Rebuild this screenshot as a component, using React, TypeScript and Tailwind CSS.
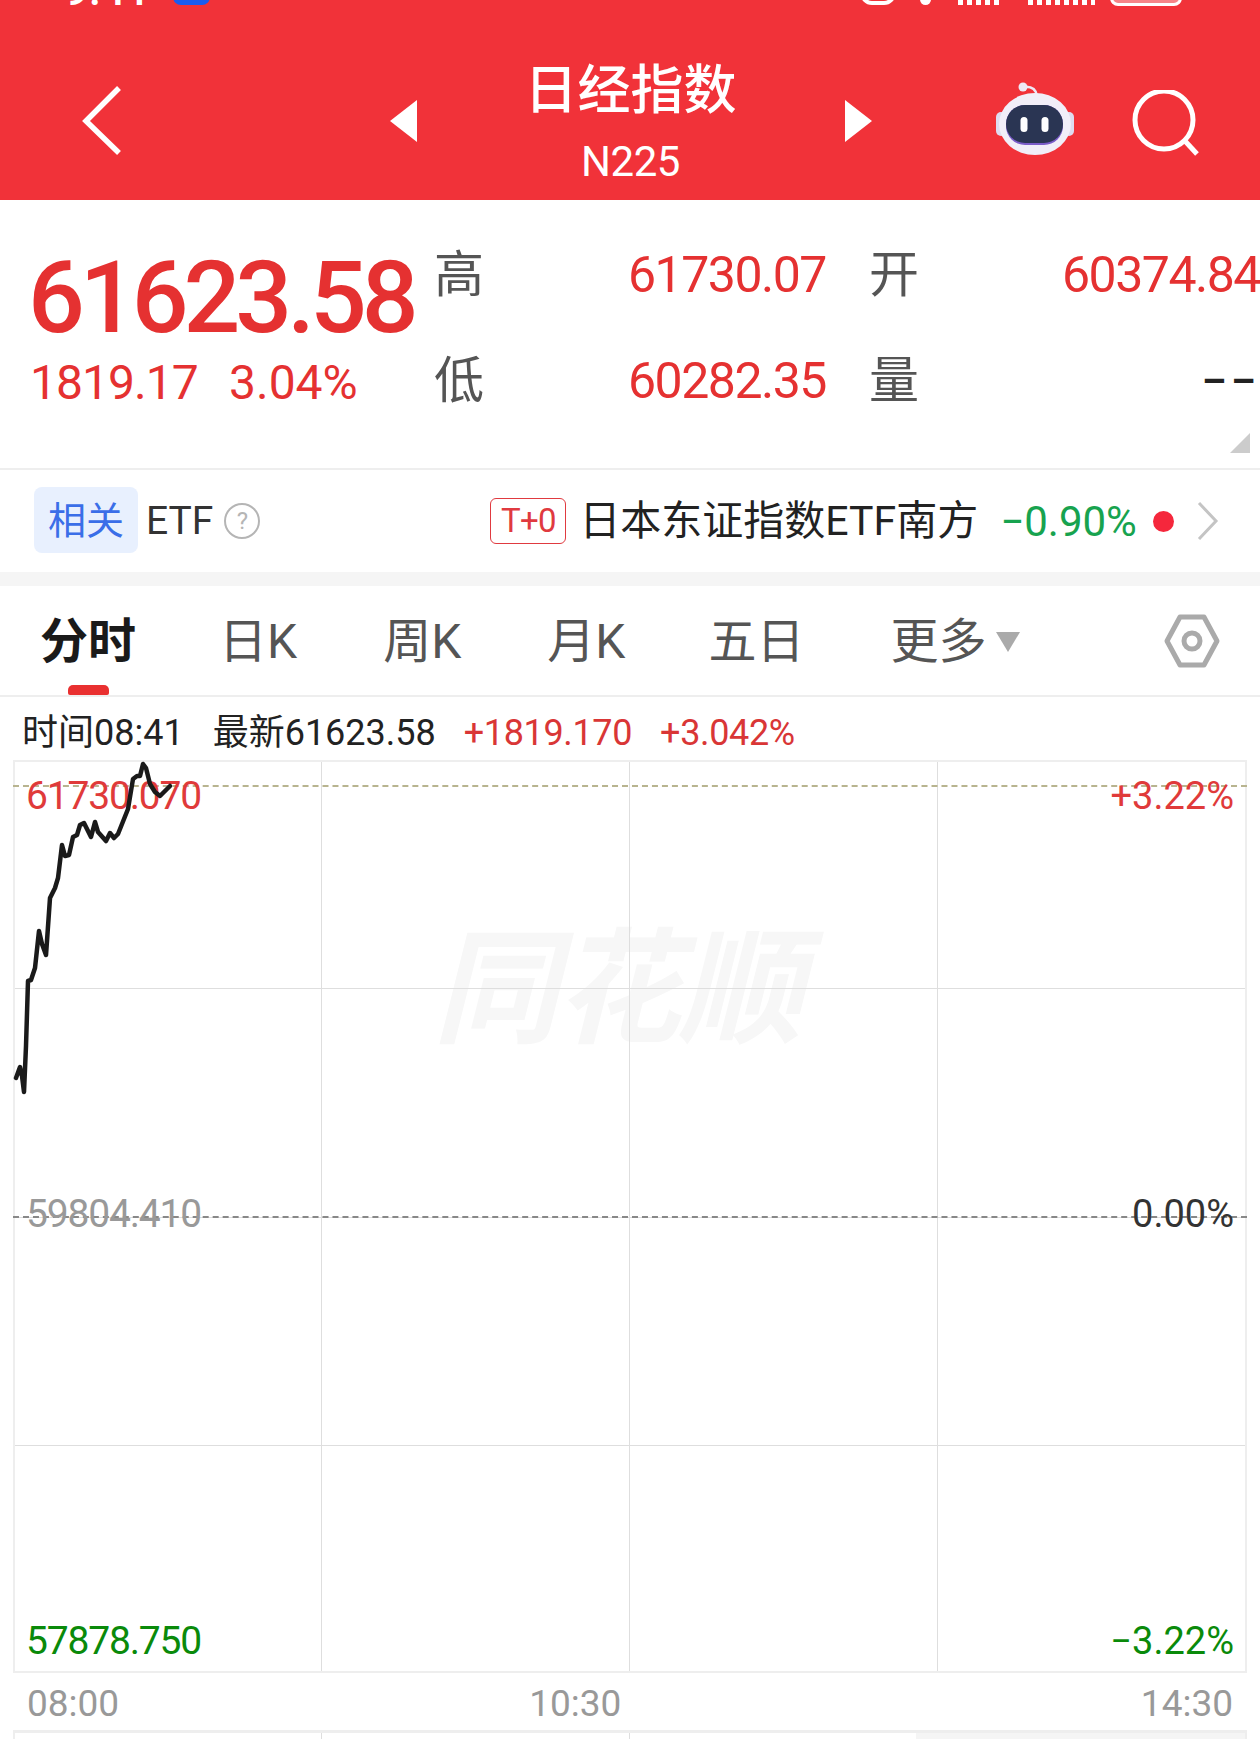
import React from 'react';

const FONT = 'font-["Roboto","Noto_Sans_CJK_SC",sans-serif]';

const points =
  '3,292 7,281 9,290 11,306 13,260 15,195 18,194 22,182 26,145 29,158 33,169 37,112 42,102 45,92 49,59 52,70 56,69 60,51 64,49 67,39 71,37 78,51 82,36 85,46 93,55 97,47 101,52 105,48 115,23 120,-7 124,-10 127,-10 130,-22 133,-18 137,-2 142,6 147,10 157,0';

const Robot = () => (
  <svg width="84" height="84" viewBox="0 0 84 84">
    <path d="M30 8c8-1 13 2 14 9" fill="none" stroke="#eee8f5" strokeWidth="2.5" />
    <circle cx="30" cy="8" r="4.5" fill="#eee8f5" />
    <rect x="3" y="33" width="10" height="24" rx="5" fill="#dedcf0" />
    <rect x="71" y="33" width="10" height="24" rx="5" fill="#dedcf0" />
    <ellipse cx="42" cy="45" rx="36" ry="31" fill="#f1eef8" />
    <rect x="13" y="26" width="57" height="40" rx="19" fill="#7a5cc8" />
    <rect x="13" y="26" width="57" height="38" rx="19" fill="#2a3553" />
    <rect x="27.5" y="38" width="7" height="15" rx="3.5" fill="#fff" />
    <rect x="48.5" y="38" width="7" height="15" rx="3.5" fill="#fff" />
  </svg>
);

const Header = () => (
  <header className="h-[200px] bg-[#f13239] text-white flex flex-col">
    <div className="h-[7px] overflow-hidden flex justify-between pl-[64px] pr-[78px]">
      <div className="flex">
        <span className="w-[109px] text-[44px] leading-none -mt-[32px] font-medium">9:41</span>
        <span className="w-[37px] h-[20px] -mt-[15px] rounded-[8px] bg-[#1a5cf0]" />
      </div>
      <div className="flex">
        <span className="w-[36px] h-[24px] -mt-[19px] rounded-full border-[4px] border-white" />
        <span className="ml-[24px] w-[11px] h-[20px] -mt-[15px] rounded-full bg-white" />
        <span className="ml-[27px] w-[42px] h-[20px] -mt-[15px] bg-[repeating-linear-gradient(90deg,#fff_0_5px,transparent_5px_9px)]" />
        <span className="ml-[28px] w-[67px] h-[20px] -mt-[15px] bg-[repeating-linear-gradient(90deg,#fff_0_5px,transparent_5px_9px)]" />
        <span className="ml-[15px] w-[72px] h-[24px] -mt-[18px] rounded-[8px] border-[3px] border-white bg-white/40" />
      </div>
    </div>
    <div className="flex-1 relative flex items-start">
      <svg className="absolute left-[78px] top-[76px]" width="50" height="74" viewBox="0 0 50 74">
        <path d="M41 5 8 38l33 32" fill="none" stroke="#fff" strokeWidth="5.5" />
      </svg>
      <div className="w-full flex justify-center items-start gap-[107px] pt-[93px] pl-[1px]">
        <div className="w-0 h-0 border-y-[21px] border-y-transparent border-r-[27px] border-r-white" />
        <div className="w-[214px] -mt-[39px] flex flex-col items-center">
          <span className="text-[53px] leading-[60px] font-medium whitespace-nowrap">日经指数</span>
          <span className="text-[42px] leading-[50px] mt-[16px] tracking-[-0.01em]">N225</span>
        </div>
        <div className="w-0 h-0 border-y-[21px] border-y-transparent border-l-[27px] border-l-white" />
      </div>
      <div className="absolute left-[993px] top-[72px]">
        <Robot />
      </div>
      <svg className="absolute left-[1130px] top-[83px]" width="72" height="72" viewBox="0 0 72 72">
        <circle cx="34" cy="30" r="29" fill="none" stroke="#fff" strokeWidth="5" />
        <path d="m55 51 12 13" stroke="#fff" strokeWidth="5" />
      </svg>
    </div>
  </header>
);

const Quote = () => (
  <section className="h-[270px] border-b-2 border-[#eeeeee] relative flex">
    <div className="w-[434px] pl-[28px] shrink-0">
      <div className="text-[100px] leading-[100px] mt-[48px] font-medium text-[#e53131] tracking-[-0.05em]">61623.58</div>
      <div className="flex text-[48px] leading-[54px] mt-[8px] ml-[2px] text-[#e53131]">
        <span className="w-[199px] tracking-[-0.02em]">1819.17</span>
        <span>3.04%</span>
      </div>
    </div>
    <div className="flex-1 grid grid-cols-[194px_241px_1fr] grid-rows-[106px_106px] pt-[22px] text-[50px] leading-[106px] text-[#e53131] tracking-[-0.03em] items-center whitespace-nowrap">
      <span className="text-[#555555]">高</span>
      <span>61730.07</span>
      <div className="flex">
        <span className="text-[#555555] w-[193px]">开</span>
        <span>60374.84</span>
      </div>
      <span className="text-[#555555]">低</span>
      <span>60282.35</span>
      <div className="flex">
        <span className="text-[#555555] w-[333px]">量</span>
        <span className="text-[#222222] font-bold text-[38px] tracking-[0.14em]">––</span>
      </div>
    </div>
    <div className="absolute right-[10px] bottom-[15px] w-0 h-0 border-b-[20px] border-b-[#cccccc] border-l-[20px] border-l-transparent" />
  </section>
);

const EtfRow = () => (
  <section className="h-[116px] border-b-[14px] border-[#f5f5f5] flex items-center pl-[34px]">
    <span className="w-[104px] h-[66px] -mt-[2px] rounded-[8px] bg-[#e8f0fe] text-[#3a6ee8] text-[38px] pt-[3px] flex items-center justify-center">相关</span>
    <span className="ml-[8px] text-[39px] text-[#333333]">ETF</span>
    <span className="ml-[11px] w-[36px] h-[36px] rounded-full border-2 border-[#b5b5b5] text-[#b5b5b5] text-[24px] flex items-center justify-center">?</span>
    <span className="ml-[230px] w-[76px] h-[46px] rounded-[6px] border border-[#e03a40] text-[#e03a40] text-[33px] flex items-center justify-center tracking-[-0.02em]">T+0</span>
    <span className="ml-[13px] text-[41px] pt-[2px] text-[#222222] whitespace-nowrap">日本东证指数ETF南方</span>
    <span className="ml-[22px] text-[42px] text-[#17a34f] whitespace-nowrap">−0.90%</span>
    <span className="ml-[16px] w-[21px] h-[21px] rounded-full bg-[#f5273c]" />
    <svg className="ml-[22px]" width="24" height="40" viewBox="0 0 24 40">
      <path d="m3 2 17 18L3 38" fill="none" stroke="#c4c4c4" strokeWidth="3" />
    </svg>
  </section>
);

const Tabs = () => (
  <nav className="h-[111px] border-b-2 border-[#eeeeee] relative flex items-center pl-[40px] pt-[2px] text-[48px] leading-none text-[#555555]">
    <span className="font-bold text-[#1a1a1a]">分时</span>
    <span className="ml-[83px]">日K</span>
    <span className="ml-[86px]">周K</span>
    <span className="ml-[86px]">月K</span>
    <span className="ml-[83px]">五日</span>
    <span className="ml-[86px]">更多</span>
    <div className="ml-[10px] w-0 h-0 border-x-[12px] border-x-transparent border-t-[20px] border-t-[#aaaaaa]" />
    <svg className="absolute left-[1164px] top-[27px]" width="56" height="56" viewBox="0 0 56 56">
      <path d="M16 4h24l13 24-13 24H16L3 28Z" fill="none" stroke="#aaaaaa" strokeWidth="5" strokeLinejoin="round" />
      <circle cx="28" cy="28" r="8" fill="none" stroke="#aaaaaa" strokeWidth="5" />
    </svg>
    <div className="absolute left-[68px] bottom-0 w-[41px] h-[10px] rounded-t-[5px] rounded-b-[2px] bg-[#e93030]" />
  </nav>
);

const InfoRow = () => (
  <div className="h-[63px] flex items-center pl-[22px] pt-[8px] text-[36px] leading-none whitespace-nowrap text-[#222222]">
    <span>时间08:41</span>
    <span className="ml-[29px]">最新61623.58</span>
    <span className="ml-[28px] text-[#d93636] tracking-[-0.01em]">+1819.170</span>
    <span className="ml-[28px] text-[#d93636] tracking-[-0.01em]">+3.042%</span>
  </div>
);

const Chart = () => (
  <div className="ml-[13px] w-[1234px] relative">
    <span className="absolute left-[420px] top-[168px] text-[125px] leading-none font-bold italic text-[#f7f7f7] tracking-[-0.02em] whitespace-nowrap">同花顺</span>
    <div className="relative h-[913px] border-2 border-[#eeeeee] grid grid-cols-[307px_308px_308px_1fr] grid-rows-[227px_229px_228px_1fr]">
      {Array.from({ length: 16 }).map((_, i) => (
        <div
          key={i}
          className={`${i % 4 !== 3 ? 'border-r border-[#dedede]' : ''} ${i < 12 ? 'border-b border-[#dedede]' : ''}`}
        />
      ))}
    </div>
    <div className="absolute left-0 right-0 top-[25px] border-t-2 border-dashed border-[#b8b48f]" />
    <div className="absolute left-0 right-0 top-[456px] border-t-2 border-dashed border-[#888888]" />
    <span className="absolute left-[13px] top-[13px] text-[39px] leading-[46px] tracking-[-0.03em] text-[#e03a3a]">61730.070</span>
    <span className="absolute right-[13px] top-[13px] text-[38px] leading-[46px] text-[#e03a3a]">+3.22%</span>
    <span className="absolute left-[13px] top-[431px] text-[39px] leading-[46px] tracking-[-0.03em] text-[#999999]">59804.410</span>
    <span className="absolute right-[13px] top-[431px] text-[38px] leading-[46px] text-[#333333]">0.00%</span>
    <span className="absolute left-[13px] top-[858px] text-[39px] leading-[46px] tracking-[-0.03em] text-[#0a8a0a]">57878.750</span>
    <span className="absolute right-[13px] top-[858px] text-[38px] leading-[46px] text-[#0a8a0a]">−3.22%</span>
    <svg className="absolute left-0 top-0 overflow-visible" width="200" height="340" viewBox="0 0 200 340">
      <polyline
        points={points}
        fill="none"
        stroke="#1a1a1a"
        strokeWidth="4.5"
        strokeLinejoin="round"
        strokeLinecap="round"
        transform="translate(0 26)"
      />
    </svg>
  </div>
);

const Axis = () => (
  <div className="h-[57px] px-[27px] pt-[4px] flex items-center text-[37px] leading-none text-[#999999]">
    <span>08:00</span>
    <span className="ml-[410px]">10:30</span>
    <span className="ml-auto">14:30</span>
  </div>
);

const LowerChart = () => (
  <div className="ml-[13px] w-[1234px] flex-1 border-t-[3px] border-x-2 border-[#eeeeee] grid grid-cols-[307px_308px_286px_1fr]">
    <div className="border-r border-[#dedede]" />
    <div className="border-r border-[#dedede]" />
    <div />
    <div className="bg-[#f5f5f5]" />
  </div>
);

export default function App() {
  return (
    <div className={`w-[1260px] h-[1739px] overflow-hidden bg-white flex flex-col ${FONT}`}>
      <Header />
      <Quote />
      <EtfRow />
      <Tabs />
      <InfoRow />
      <Chart />
      <Axis />
      <LowerChart />
    </div>
  );
}
